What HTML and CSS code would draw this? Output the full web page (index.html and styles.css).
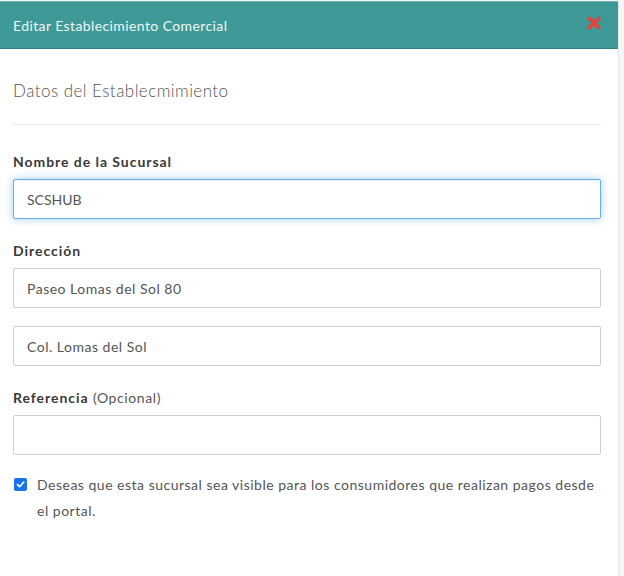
FILE: index.html
```html
<!DOCTYPE html>
<html lang="es">
<head>
<meta charset="utf-8">
<title>Editar Establecimiento Comercial</title>
<link rel="stylesheet" href="styles.css">
</head>
<body>
<div class="modal">
  <div class="modal-header">
    <span class="modal-title">Editar Establecimiento Comercial</span>
    <svg class="close" width="14" height="14" viewBox="0 0 14 14" aria-label="Cerrar">
      <path d="M2.5 2.5 L11.5 11.5 M11.5 2.5 L2.5 11.5" stroke="#e8403a" stroke-width="3.6" stroke-linecap="round"/>
    </svg>
  </div>
  <div class="modal-body">
    <h4 class="section-title">Datos del Establecmimiento</h4>
    <hr class="divider">
    <div class="field">
      <label class="label">Nombre de la Sucursal</label>
      <div class="input focus">SCSHUB</div>
    </div>
    <div class="field">
      <label class="label">Dirección</label>
      <div class="input">Paseo Lomas del Sol 80</div>
      <div class="input second">Col. Lomas del Sol</div>
    </div>
    <div class="field">
      <label class="label">Referencia <span class="opt">(Opcional)</span></label>
      <div class="input"></div>
    </div>
    <div class="check-row">
      <span class="checkbox">
        <svg width="9" height="9" viewBox="0 0 9 9"><path d="M1.5 4.6 L3.6 6.7 L7.6 2.2" fill="none" stroke="#fff" stroke-width="1.7" stroke-linecap="round" stroke-linejoin="round"/></svg>
      </span>
      <p class="check-text">Deseas que esta sucursal sea visible para los consumidores que realizan pagos desde el portal.</p>
    </div>
  </div>
</div>
</body>
</html>
```

FILE: styles.css
```css
html, body {
  margin: 0;
  padding: 0;
}
body {
  background: #f6f6f6;
  font-family: Lato, "Open Sans", sans-serif;
  width: 624px;
  height: 576px;
  overflow: hidden;
}
.modal {
  width: 619px;
  height: 576px;
  background: #fff;
  border-right: 1px solid #e6e6e6;
  box-sizing: border-box;
}
.modal-header {
  margin-top: 1px;
  height: 48px;
  box-sizing: border-box;
  background: #3f9997;
  border-top: 1px solid #6fb3b1;
  border-bottom: 1px solid #2f8583;
  display: flex;
  align-items: center;
  justify-content: space-between;
  padding: 0 17px 0 13px;
}
.modal-title {
  color: #eef7f7;
  font-size: 14px;
  letter-spacing: 0.4px;
}
.close {
  margin-top: -5px;
}
.modal-body {
  padding: 30px 17px 0 13px;
}
.section-title {
  margin: 0;
  font-size: 17px;
  font-weight: 300;
  line-height: 24px;
  letter-spacing: 0.45px;
  color: #555;
}
.divider {
  border: 0;
  border-top: 1px solid #ececec;
  margin: 21px 0 27px 0;
}
.field {
  margin-bottom: 22px;
}
.label {
  display: block;
  font-size: 14px;
  line-height: 20px;
  font-weight: 700;
  letter-spacing: 0.95px;
  color: #3a3a3a;
  margin-bottom: 7px;
}
.opt {
  font-weight: 400;
  letter-spacing: 0.6px;
  color: #555;
}
.input {
  height: 40px;
  box-sizing: border-box;
  border: 1px solid #cfcfd4;
  border-radius: 2px;
  padding: 0 13px;
  display: flex;
  align-items: center;
  font-size: 14px;
  letter-spacing: 0.5px;
  color: #555;
  background: #fff;
}
.input.focus {
  border-color: #66afe9;
  box-shadow: inset 0 1px 1px rgba(0,0,0,.075), 0 0 8px rgba(102,175,233,.6);
  letter-spacing: 0;
}
.input.second {
  margin-top: 18px;
}
.check-row {
  display: flex;
  align-items: flex-start;
  margin-top: -5px;
}
.checkbox {
  flex: none;
  width: 13px;
  height: 13px;
  border-radius: 2px;
  background: #1a73e8;
  display: flex;
  align-items: center;
  justify-content: center;
  margin: 6px 10px 0 1px;
}
.check-text {
  margin: 0;
  font-size: 14px;
  line-height: 26px;
  letter-spacing: 0.5px;
  color: #555;
}
```
